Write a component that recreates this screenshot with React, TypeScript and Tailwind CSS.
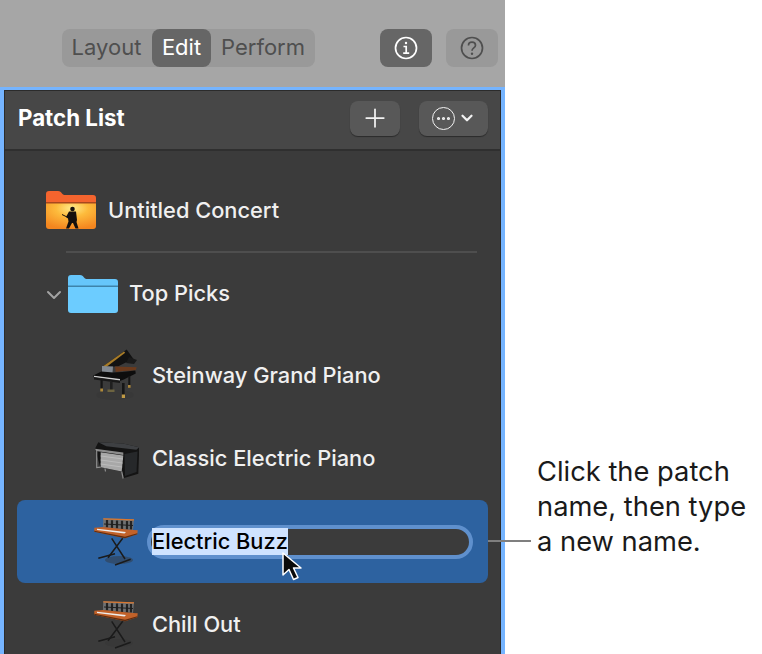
import React from 'react';
import { Plus, ChevronDown, Ellipsis } from 'lucide-react';

const FolderOrange = () => (
  <svg width="52" height="40" viewBox="0 0 52 40" className="shrink-0">
    <defs>
      <radialGradient id="stage" cx="0.52" cy="0.2" r="0.8">
        <stop offset="0" stopColor="#ffeb8c" />
        <stop offset="0.4" stopColor="#fdbb3c" />
        <stop offset="1" stopColor="#f4861f" />
      </radialGradient>
    </defs>
    <path d="M1 12V4a3 3 0 0 1 3-3h9c2 0 3 1 4 2.500 1 1.200 2 1.500 3.500 1.500H48a3 3 0 0 1 3 3v5z" fill="#f4642e" />
    <path d="M1 13h50v23a3 3 0 0 1-3 3H4a3 3 0 0 1-3-3z" fill="url(#stage)" />
    <rect x="1" y="12" width="50" height="1.500" fill="#a8481e" />
    <circle cx="27.500" cy="19" r="2.300" fill="#15110e" />
    <path d="M24 21.500h7l1 8.500-.5 2 2 6.500h-3L28 33h-1l-3 5.500h-3l2.500-7-.5-3-2-1.500z" fill="#15110e" />
    <path d="M17 24.500l7 3.500" stroke="#15110e" strokeWidth="1" />
  </svg>
);

const FolderBlue = () => (
  <svg width="52" height="40" viewBox="0 0 52 40" className="shrink-0">
    <path d="M1 12V4a3 3 0 0 1 3-3h9c2 0 3 1 4 2.500 1 1.200 2 1.500 3.500 1.500H48a3 3 0 0 1 3 3v4z" fill="#66c6fb" />
    <path d="M1 13h50v23a3 3 0 0 1-3 3H4a3 3 0 0 1-3-3z" fill="#6cccff" />
    <rect x="1" y="11.500" width="50" height="1.500" fill="#3d83ab" />
  </svg>
);

const GrandPiano = () => (
  <svg width="46" height="54" viewBox="0 0 46 54">
    <ellipse cx="22" cy="46" rx="19" ry="5" fill="#363636" opacity="0.5" />
    <path d="M8.700 18.200 33.700.5l6.600 9.300-15 7.400z" fill="#121212" />
    <path d="M9 18 31 2.500l1.200 1.300L12 19z" fill="#a87c28" />
    <path d="M36 8l8 3-3 4-8-1z" fill="#1a1a1a" />
    <path d="M22 17.500l21.700.7-1 3-13 .8-7 1z" fill="#6b3a1c" />
    <path d="M9 17l11 .5-.5 6.500-10.500-.5z" fill="#838a92" />
    <path d="M.3 26.500l8-4 12 1 9-.5 13-1.500.5 3-12 6-4 1.500-26-3.500z" fill="#0d0d0d" />
    <path d="M1 26.700l26 3.300v1.500L1 28z" fill="#cfcfcf" />
    <path d="M1 28.500l26 3.500v2L1 30.500z" fill="#181818" />
    <rect x="7.500" y="31" width="2.200" height="9" fill="#161616" />
    <rect x="7.300" y="39.500" width="2.700" height="3" fill="#b08a3a" />
    <rect x="29" y="34" width="2.600" height="12" fill="#161616" />
    <rect x="28.800" y="45.500" width="3.200" height="3.500" fill="#c09a45" />
    <rect x="35.300" y="27" width="2" height="10" fill="#161616" />
    <rect x="35" y="36" width="2.600" height="2.800" fill="#a8843a" />
    <rect x="17" y="33" width="2.600" height="8" fill="#1f1f1f" />
    <rect x="14.500" y="40.500" width="7" height="2.500" fill="#6d6440" />
  </svg>
);

const ElectricPiano = () => (
  <svg width="46" height="42" viewBox="0 0 46 42">
    <path d="M2 10.800 5.300 4.200 30 5.500l16.300 3.700-1 26.600-15 4.400-2-6.700-21-4.300z" fill="#141414" />
    <path d="M5.300 4.200 30 5.500l16.300 3.700-3 2.500-30-3.500z" fill="#3e4043" />
    <path d="M2 10.800l28.300 3.700v2.500L3 13z" fill="#8d8d8d" />
    <path d="M7.700 14.200l22.600 3.300-1.600 16-21-4.300z" fill="#a8a8a8" />
    <path d="M7.700 18l22.300 3M7.700 22l21.800 3M7.700 26l21.400 3" stroke="#bcbcbc" strokeWidth="1" />
    <path d="M31.500 16l13-2.500-1 20.500-11.500 4z" fill="#26282a" />
    <path d="M3.700 13v16.500l4-.4M28.700 33.500l1.500 7M12 30.500l.5 3" stroke="#8e8e8e" strokeWidth="1.200" fill="none" />
  </svg>
);

const Synth = () => (
  <svg width="46" height="52" viewBox="0 0 46 52">
    <ellipse cx="26" cy="44" rx="14" ry="4" fill="#363636" opacity="0.45" />
    <path d="M10.300 2.300 41 3.300 40 14 10 11z" fill="#6f7173" />
    <path d="M10.300 2.300 41 3.300v1.300L10.300 3.600z" fill="#d9772f" />
    <path d="M14 4v7.500M19 4.300v7.700M24 4.500v8M29 4.700v8.300M34 5v8.500M38 5v8.500" stroke="#232323" strokeWidth="2.200" />
    <path d="M11 8l29 1.500" stroke="#1f1f1f" strokeWidth="1.200" />
    <path d="M1.300 11.700 10 11l30 3 4.700.3-.4 4-12.300 4L1.300 15.700z" fill="#c2622a" />
    <path d="M4 12.700l29 3.200-1.500 1.700L4 14z" fill="#ededed" />
    <path d="M1.300 14.700 32 20.700l12.300-3.400v1L32 22.300 1.300 15.700z" fill="#5e2c10" />
    <path d="M18.700 22.300 32 43M29.700 22.300 15 41.700" stroke="#1b1b1b" strokeWidth="1.500" fill="none" />
    <path d="M5.300 42.300 22 37.700M22 49l15.700-5.700" stroke="#1b1b1b" strokeWidth="1.700" />
  </svg>
);

const PatchRow = ({ icon, name }: { icon: React.ReactNode; name: string }) => (
  <div className="h-[83px] shrink-0 flex items-center pl-[88px]">
    <div className="w-[46px] flex justify-center shrink-0">{icon}</div>
    <span className="ml-[13px] text-[21.800px] font-medium text-[#f0f0f0]">{name}</span>
  </div>
);

export default function App() {
  return (
    <div className="relative w-[762px] h-[654px] flex bg-white overflow-hidden font-['Inter','Liberation_Sans',sans-serif]">
      <div className="w-[505px] h-full flex flex-col shrink-0">
        <div className="h-[87px] bg-[#a6a6a6] flex items-start pt-[29px] pl-[62px] shrink-0">
          <div className="w-[253px] h-[38px] rounded-lg bg-[#999999] flex items-center text-[22px] text-[#4f4f4f] pb-[1px]">
            <span className="w-[89px] text-center">Layout</span>
            <span className="ml-[1px] w-[59px] h-[38px] mt-[1px] rounded-lg bg-[#666666] text-white flex items-center justify-center pb-[1px]">Edit</span>
            <span className="ml-[10px]">Perform</span>
          </div>
          <div className="ml-[65px] w-[52px] h-[38px] rounded-lg bg-[#666666] flex items-center justify-center">
            <svg width="24" height="24" viewBox="0 0 24 24" fill="none" stroke="#fff" strokeWidth="1.700">
              <circle cx="12" cy="12" r="10.500" />
              <path d="M9.500 10.500H12.200V17M9.200 17.200h6" />
              <circle cx="12" cy="7" r="1.200" fill="#fff" stroke="none" />
            </svg>
          </div>
          <div className="ml-[14px] w-[52px] h-[38px] rounded-lg bg-[#999999] flex items-center justify-center">
            <svg width="24" height="24" viewBox="0 0 24 24" fill="none" stroke="#4f4f4f" strokeWidth="1.700">
              <circle cx="12" cy="12" r="10.500" />
              <path d="M8.500 9.500c0-2 1.500-3.300 3.500-3.300s3.500 1.200 3.500 3c0 2.800-3.500 2.600-3.500 5.600" />
              <circle cx="12" cy="17.800" r="1.200" fill="#4f4f4f" stroke="none" />
            </svg>
          </div>
        </div>
        <div className="flex-1 min-h-0 border-x-[4px] border-t-[3px] border-[#75b4ff]">
          <div className="h-full border-x border-t border-[#2b2b2b] flex flex-col bg-[#3b3b3b] overflow-hidden">
            <div className="h-[60px] shrink-0 bg-[#474747] border-b-2 border-b-[#2f2f2f] flex items-center pl-[13px] pr-[12px] pb-[4px]">
              <span className="font-bold text-[22.300px] text-white">Patch List</span>
              <button className="ml-auto w-[50px] h-[35px] rounded-lg bg-[#585858] shadow-[0_1px_1px_rgba(0,0,0,0.4)] flex items-center justify-center text-[#f2f2f2]">
                <Plus size={30} strokeWidth={1.400} />
              </button>
              <button className="ml-[19px] w-[69px] h-[35px] rounded-lg bg-[#585858] shadow-[0_1px_1px_rgba(0,0,0,0.4)] flex items-center justify-center gap-[3px] text-[#f2f2f2]">
                <span className="w-[23px] h-[23px] rounded-full border-[1.700px] border-[#f2f2f2] flex items-center justify-center">
                  <Ellipsis size={17} strokeWidth={2.500} />
                </span>
                <ChevronDown size={18} strokeWidth={3} />
              </button>
            </div>
            <div className="h-[18px] shrink-0" />
            <div className="h-[82px] shrink-0 flex items-center pl-[40px]">
              <FolderOrange />
              <span className="ml-[11px] text-[21.800px] font-medium text-[#f0f0f0]">Untitled Concert</span>
            </div>
            <div className="h-[2px] shrink-0 ml-[61px] mr-[23px] bg-[#4e4e4e]" />
            <div className="h-[81px] shrink-0 flex items-center pl-[41px]">
              <svg width="16" height="10" viewBox="0 0 16 10" fill="none" stroke="#a3a3a3" strokeWidth="2" strokeLinecap="round" strokeLinejoin="round" className="mt-[2px]">
                <path d="M2 2l6 6 6-6" />
              </svg>
              <div className="ml-[5px]"><FolderBlue /></div>
              <span className="ml-[10px] text-[21.800px] font-medium text-[#f0f0f0]">Top Picks</span>
            </div>
            <PatchRow icon={<GrandPiano />} name="Steinway Grand Piano" />
            <PatchRow icon={<ElectricPiano />} name="Classic Electric Piano" />
            <div className="relative h-[83px] shrink-0 mx-[12px] rounded-lg bg-[#2d62a0] flex items-center pl-[76px]">
              <div className="w-[46px] flex justify-center shrink-0"><Synth /></div>
              <div className="ml-[8px] w-[326px] h-[34px] rounded-full bg-[#3b3b3b] border-[4px] border-[#5f90cd] flex items-center pl-[1px]">
                <span className="h-[27px] flex items-center bg-[#cfe3ff] text-[21.800px] font-medium text-black">Electric Buzz</span>
              </div>
              <svg width="24" height="32" viewBox="0 0 24 32" className="absolute left-[263px] top-[51px]">
                <path d="M3 2v22l6-5.500 4.500 10 4.500-2-4.500-9.500H21z" fill="#0a0a0a" stroke="#fff" strokeWidth="1.500" strokeLinejoin="round" />
              </svg>
            </div>
            <PatchRow icon={<Synth />} name="Chill Out" />
          </div>
        </div>
      </div>
      <div className="pl-[32px] pt-[454px] text-[27.300px] leading-[35px] text-[#1a1a1a] whitespace-nowrap">
        <p>Click the patch</p>
        <p>name, then type</p>
        <p>a new name.</p>
      </div>
      <div className="absolute left-[488px] top-[540px] w-[43px] h-[2px] bg-[#7f7f7f]" />
    </div>
  );
}
